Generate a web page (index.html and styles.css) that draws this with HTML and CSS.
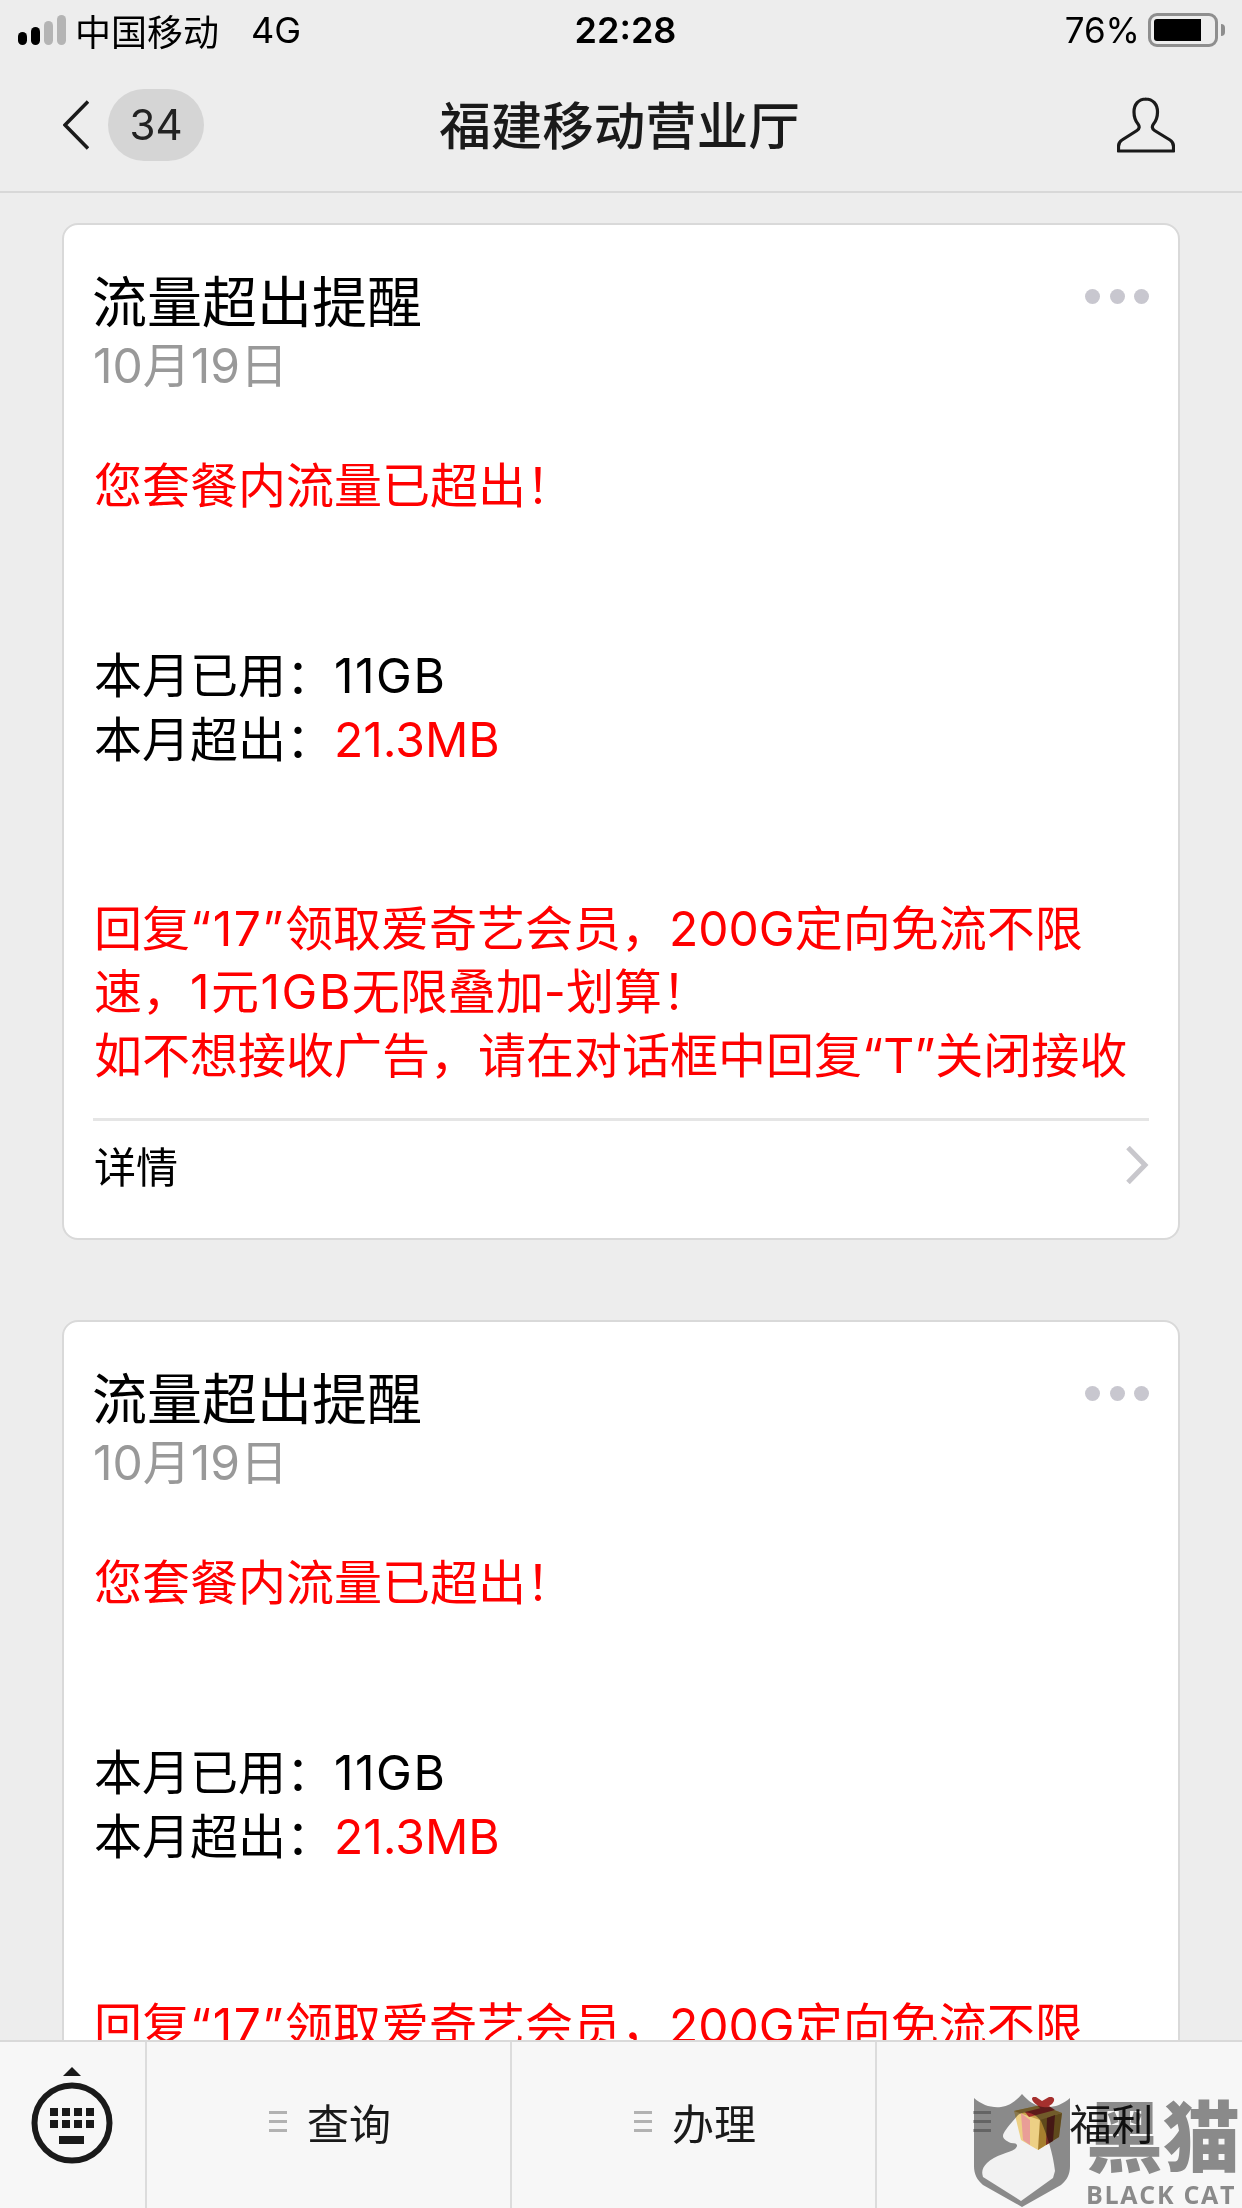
FILE: index.html
```html
<!DOCTYPE html>
<html lang="zh-CN">
<head>
    <meta charset="UTF-8">
    <title>福建移动营业厅</title>
    <link rel="stylesheet" href="styles.css">
</head>
<body>
<div class="page">
    <header class="top">
        <div class="status">
            <div class="status-left">
                <span class="signal">
                    <i class="bar b1"></i><i class="bar b2"></i><i class="bar b3"></i><i class="bar b4"></i>
                </span>
                <span class="carrier">中国移动</span>
                <span class="net">4G</span>
            </div>
            <div class="time">22:28</div>
            <div class="status-right">
                <span class="percent">76%</span>
                <span class="battery"><i class="battery-fill"></i></span>
                <i class="battery-cap"></i>
            </div>
        </div>
        <nav class="nav">
            <div class="nav-left">
                <svg class="back" width="26" height="50" viewBox="0 0 26 50"><path d="M25 1.500 2 25l23 23.500" fill="none" stroke="#1a1a1a" stroke-width="3.500"/></svg>
                <span class="badge">34</span>
            </div>
            <h1 class="nav-title">福建移动营业厅</h1>
            <svg class="person" width="58" height="56" viewBox="0 0 58 56"><path d="M29 2c-7.500 0-12 5.500-12 13 0 5 1.500 9 4 12 1.800 2.200 1.500 5-1 6.500L5 43c-2.500 1.500-3.500 3.500-3.500 6.500v4.500h55v-4.500c0-3-1-5-3.500-6.500l-15.500-9.500c-2.500-1.500-2.800-4.300-1-6.500 2.500-3 4-7 4-12 0-7.500-4.500-13-12-13Z" fill="none" stroke="#1a1a1a" stroke-width="3.200" stroke-linejoin="round"/></svg>
        </nav>
    </header>

    <main class="feed">
        <section class="card">
            <div class="card-head">
                <div>
                    <h2 class="card-title">流量超出提醒</h2>
                    <div class="card-date">10月19日</div>
                </div>
                <div class="dots"><i></i><i></i><i></i></div>
            </div>
            <div class="card-body">
                <p class="red">您套餐内流量已超出！</p>
                <p class="blank2">本月已用：<span class="wide">11GB</span><br>本月超出：<span class="red">21.3MB</span></p>
                <p class="red blank2">回复<span class="wide">“17”</span>领取爱奇艺会员，200G定向免流不限<br>速，<span class="wide">1元1GB</span>无限叠加-划算！<br>如不想接收广告，请在对话框中回复“T”关闭接收</p>
            </div>
            <div class="card-foot">
                <span>详情</span>
                <svg width="24" height="38" viewBox="0 0 24 38"><path d="M3 1.500 20 19 3 36.500" fill="none" stroke="#c8c7cc" stroke-width="5"/></svg>
            </div>
        </section>

        <section class="card">
            <div class="card-head">
                <div>
                    <h2 class="card-title">流量超出提醒</h2>
                    <div class="card-date">10月19日</div>
                </div>
                <div class="dots"><i></i><i></i><i></i></div>
            </div>
            <div class="card-body">
                <p class="red">您套餐内流量已超出！</p>
                <p class="blank2">本月已用：<span class="wide">11GB</span><br>本月超出：<span class="red">21.3MB</span></p>
                <p class="red blank2">回复<span class="wide">“17”</span>领取爱奇艺会员，200G定向免流不限</p>
            </div>
        </section>
    </main>

    <footer class="menu">
        <div class="menu-kb">
            <svg width="84" height="100" viewBox="0 0 84 100">
                <path d="M33 10 42 1l9 9Z" fill="#1a1a1a"/>
                <ellipse cx="42" cy="57" rx="37.500" ry="37.500" fill="none" stroke="#1a1a1a" stroke-width="6"/>
                <g fill="#1a1a1a">
                    <rect x="20" y="42" width="8" height="8"/><rect x="32" y="42" width="8" height="8"/><rect x="44" y="42" width="8" height="8"/><rect x="56" y="42" width="8" height="8"/>
                    <rect x="20" y="54" width="8" height="8"/><rect x="32" y="54" width="8" height="8"/><rect x="44" y="54" width="8" height="8"/><rect x="56" y="54" width="8" height="8"/>
                    <rect x="29" y="70" width="25" height="8"/>
                </g>
            </svg>
        </div>
        <div class="menu-item"><span class="lines"><i></i><i></i><i></i></span><span>查询</span></div>
        <div class="menu-item"><span class="lines"><i></i><i></i><i></i></span><span>办理</span></div>
        <div class="menu-item menu-gift">
            <span class="lines"><i></i><i></i><i></i></span>
            <svg class="gift" width="50" height="54" viewBox="0 0 50 54">
                <path d="M1 14 28 8l21 8-3 24-21 13-17-10Z" fill="#f2d488"/>
                <path d="M27 22l22-6-3 24-21 13Z" fill="#a9812f"/>
                <path d="M1 14 28 8l21 8-22 7Z" fill="#c9a24a"/>
                <path d="M8 16l9 7 0 25-7-5Z" fill="#eea09a"/>
                <path d="M34 21l8-3-2 26-7 4Z" fill="#7a2a25"/>
                <path d="M12 15 36 9l6 4-26 7Z" fill="#a5302e"/>
                <path d="M24 8C17 3 18-1 23 0l6 4 7-4c5-1 7 3 3 7l-6 4-5 1Z" fill="#a5302e"/>
            </svg>
            <span>福利</span>
        </div>
    </footer>

    <div class="mark">
        <svg class="mark-shield" width="98" height="115" viewBox="0 0 98 115">
            <path d="M1 5c8 7 17 10 27 9 8-1 15-6 21-13 6 7 13 12 21 13 10 1 19-2 27-9v68c0 8-3 14-9 19l-39 22-39-22c-6-5-9-11-9-19Z" fill="#8f8f8f"/>
            <path d="M45 22C50 18 60 18 68 28 74 42 80 60 82 78l-2 7-32 23-38-24c-2-6 0-10 4-14 8-8 22-10 28-14 4-4 2-6-4-6-8-4-10-6-6-12 4-6 8-10 13-16Z" fill="#fafafa"/>
        </svg>
        <div class="mark-text">
            <div class="mark-cn">黑猫</div>
            <div class="mark-en">BLACK CAT</div>
        </div>
    </div>
</div>
</body>
</html>
```

FILE: styles.css
```css
* {
    box-sizing: border-box;
}
html, body {
    margin: 0;
    padding: 0;
}
body {
    font-family: Inter, "Noto Sans CJK SC", sans-serif;
    background-color: #ededed;
    color: #000;
}
.page {
    position: relative;
    width: 1242px;
    height: 2208px;
    overflow: hidden;
    display: flex;
    flex-direction: column;
}
p, h1, h2 {
    margin: 0;
    font-weight: normal;
}

/* status bar + nav */
.top {
    height: 193px;
    flex-shrink: 0;
    border-bottom: 2px solid #d8d8d8;
}
.status {
    height: 60px;
    display: grid;
    grid-template-columns: 1fr auto 1fr;
    align-items: center;
    font-size: 36px;
    padding: 0 17px 0 18px;
}
.status-left {
    display: flex;
    align-items: center;
}
.signal {
    display: flex;
    align-items: flex-end;
    gap: 4px;
    height: 30px;
    margin-right: 9px;
}
.bar {
    width: 9px;
    border-radius: 5px;
    background: #000;
}
.b1 { height: 13px; }
.b2 { height: 18px; }
.b3 { height: 24px; background: #b4b4b4; }
.b4 { height: 30px; background: #b4b4b4; }
.net {
    margin-left: 32px;
}
.time {
    font-weight: 600;
    font-size: 36px;
    padding-left: 8px;
}
.status-right {
    display: flex;
    align-items: center;
    justify-content: flex-end;
}
.percent {
    font-size: 35px;
    margin-right: 8px;
}
.battery {
    width: 70px;
    height: 34px;
    border: 3px solid #8e8e8e;
    border-radius: 9px;
    padding: 3px;
    display: flex;
}
.battery-fill {
    width: 47px;
    background: #000;
    border-radius: 3px 0 0 3px;
}
.battery-cap {
    width: 4px;
    height: 12px;
    margin-left: 3px;
    background: #8e8e8e;
    border-radius: 0 4px 4px 0;
}
.nav {
    height: 131px;
    position: relative;
    display: flex;
    align-items: center;
    justify-content: space-between;
    padding: 0 67px 2px 63px;
}
.nav-left {
    display: flex;
    align-items: center;
    gap: 19px;
}
.badge {
    width: 96px;
    height: 72px;
    border-radius: 36px;
    background: #d5d5d5;
    color: #222;
    font-size: 42px;
    display: flex;
    align-items: center;
    justify-content: center;
}
.nav-title {
    position: absolute;
    left: 0;
    right: 3px;
    top: 34px;
    text-align: center;
    font-size: 51.500px;
    line-height: 64px;
    font-weight: 500;
    color: #1a1a1a;
}

/* message cards */
.feed {
    flex: 1;
    min-height: 0;
    overflow: hidden;
    padding: 30px 62px 0 62px;
}
.card {
    background: #fff;
    border: 2px solid #d9d9d9;
    border-radius: 16px;
    padding: 0 29px 0 30px;
    margin-bottom: 80px;
}
.card-head {
    display: flex;
    justify-content: space-between;
    padding-top: 45px;
}
.card-title {
    font-size: 55px;
    line-height: 64px;
    margin-left: -2px;
}
.card-date {
    font-size: 48px;
    line-height: 60px;
    margin: 2px 0 0 -1px;
    color: #999;
}
.dots {
    display: flex;
    gap: 9.500px;
    margin-top: 19px;
}
.dots i {
    width: 15px;
    height: 15px;
    border-radius: 50%;
    background: #c8c7cf;
}
.card-body {
    margin-top: 58px;
    font-size: 48px;
    line-height: 63.4px;
    white-space: nowrap;
}
.blank2 {
    margin-top: 126.800px;
}
.blank2 + .blank2 {
    margin-top: 126px;
}
.wide {
    letter-spacing: 1.500px;
}
.red {
    color: #f00;
}
.card-foot {
    margin-top: 31px;
    margin-left: -1px;
    height: 120px;
    border-top: 3px solid #e5e5e5;
    display: flex;
    align-items: center;
    justify-content: space-between;
    font-size: 42px;
    padding: 0 0 30px 1px;
}

/* bottom menu */
.menu {
    height: 168px;
    flex-shrink: 0;
    display: flex;
    background: #f7f7f7;
    border-top: 2px solid #d9d9d9;
    position: relative;
    font-size: 42px;
    color: #1a1a1a;
}
.menu-kb {
    width: 145px;
    display: flex;
    align-items: center;
    padding: 0 0 18px 30px;
}
.menu-item {
    width: 365px;
    border-left: 2px solid #dcdcdc;
    display: flex;
    align-items: center;
    justify-content: center;
    gap: 20px;
    padding: 0 0 8px 3px;
}
.menu-item:last-child {
    width: 367px;
}
.lines {
    display: flex;
    flex-direction: column;
    gap: 6px;
}
.lines i {
    width: 18px;
    height: 3px;
    background: #b2b2b2;
}
.gift {
    position: absolute;
    left: 1013px;
    top: 55px;
}
.menu-gift {
    position: static;
    gap: 78px;
    padding-left: 8px;
}

/* watermark sits over the bottom right corner */
.mark {
    position: absolute;
    left: 973px;
    top: 2093px;
    width: 269px;
    display: flex;
    gap: 15px;
    color: #8f8f8f;
    pointer-events: none;
    mix-blend-mode: multiply;
}
.mark-shield {
    flex-shrink: 0;
}
.mark-text {
    display: flex;
    flex-direction: column;
}
.mark-cn {
    font-family: "Noto Sans CJK SC", sans-serif;
    font-weight: 900;
    font-size: 77px;
    line-height: 80px;
    white-space: nowrap;
}
.mark-en {
    font-family: "Open Sans", sans-serif;
    font-weight: 700;
    font-size: 25px;
    line-height: 26px;
    letter-spacing: 1.700px;
    white-space: nowrap;
    margin-top: 8px;
}
```
